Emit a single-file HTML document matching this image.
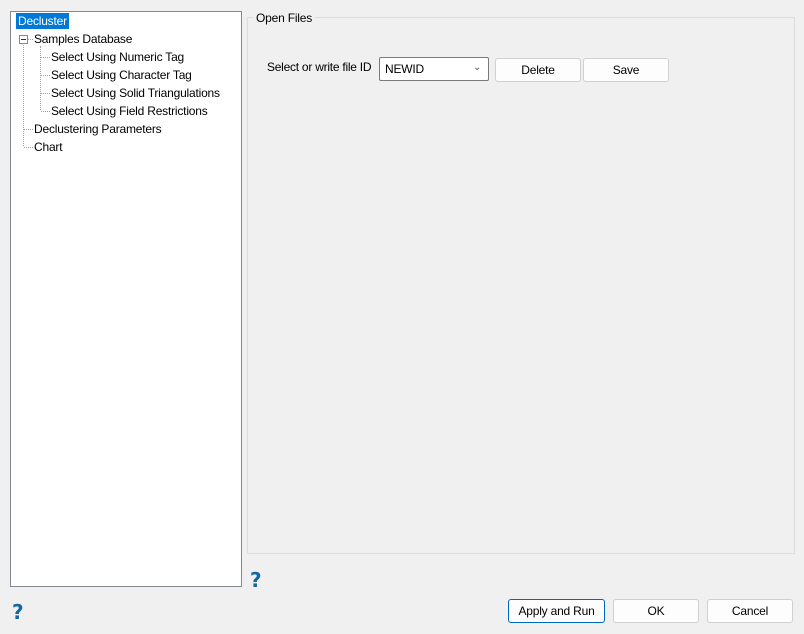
<!DOCTYPE html>
<html><head><style>
body{margin:0;width:804px;height:634px;background:#f0f0f0;font-family:"Liberation Sans",sans-serif;font-size:12px;letter-spacing:-0.2px;color:#000;position:relative;overflow:hidden}
.a{position:absolute}
.tree{left:10px;top:11px;width:230px;height:574px;background:#fff;border:1px solid #828790}
.t{position:absolute;white-space:nowrap;line-height:16px}
.dv{position:absolute;border-left:1px dotted #a0a0a0}
.dh{position:absolute;border-top:1px dotted #a0a0a0}
.grp{left:247px;top:17px;height:535px;border:1px solid #dcdcdc;width:546px}
.btn{position:absolute;background:#fdfdfd;border:1px solid #d0d0d0;border-radius:3px;text-align:center;line-height:22px;box-sizing:border-box}
.q{position:absolute;color:#1468a0;font-weight:bold;font-size:20px;font-family:"DejaVu Sans",sans-serif}
</style></head><body>
<div class="a tree">
 <div class="t" style="left:5px;top:1px;background:#0078d7;color:#fff;padding:0 2px">Decluster</div>
 <div class="dv" style="left:12px;top:24px;height:110px"></div>
 <div class="a" style="left:8px;top:23px;width:7px;height:7px;border:1px solid #888;background:#fff"></div>
 <div class="a" style="left:10px;top:27px;width:5px;border-top:1px solid #333"></div>
 <div class="dh" style="left:17px;top:27px;width:5px"></div>
 <div class="t" style="left:23px;top:19px">Samples Database</div>
 <div class="dv" style="left:29px;top:34px;height:64px"></div>
 <div class="dh" style="left:30px;top:45px;width:9px"></div>
 <div class="dh" style="left:30px;top:63px;width:9px"></div>
 <div class="dh" style="left:30px;top:81px;width:9px"></div>
 <div class="dh" style="left:30px;top:99px;width:9px"></div>
 <div class="t" style="left:40px;top:37px">Select Using Numeric Tag</div>
 <div class="t" style="left:40px;top:55px">Select Using Character Tag</div>
 <div class="t" style="left:40px;top:73px">Select Using Solid Triangulations</div>
 <div class="t" style="left:40px;top:91px">Select Using Field Restrictions</div>
 <div class="dh" style="left:13px;top:117px;width:9px"></div>
 <div class="dh" style="left:13px;top:135px;width:9px"></div>
 <div class="t" style="left:23px;top:109px">Declustering Parameters</div>
 <div class="t" style="left:23px;top:127px">Chart</div>
</div>
<div class="a grp"></div>
<div class="t" style="left:253px;top:10px;background:#f0f0f0;padding:0 3px">Open Files</div>
<div class="t" style="left:267px;top:59px;letter-spacing:-0.25px">Select or write file ID</div>
<div class="a" style="left:379px;top:57px;width:108px;height:22px;background:#fff;border:1px solid #7a7a7a;border-radius:2px"><span class="t" style="left:5px;top:3px">NEWID</span><span class="t" style="left:93px;top:2px;font-size:10px;color:#555">&#8964;</span></div>
<div class="btn" style="left:495px;top:58px;width:86px;height:24px">Delete</div>
<div class="btn" style="left:583px;top:58px;width:86px;height:24px">Save</div>
<div class="q" style="left:250px;top:568px">?</div>
<div class="q" style="left:12px;top:600px">?</div>
<div class="btn" style="left:508px;top:599px;width:97px;height:24px;border:1px solid #0067c0">Apply and Run</div>
<div class="btn" style="left:613px;top:599px;width:86px;height:24px">OK</div>
<div class="btn" style="left:707px;top:599px;width:86px;height:24px">Cancel</div>
</body></html>
